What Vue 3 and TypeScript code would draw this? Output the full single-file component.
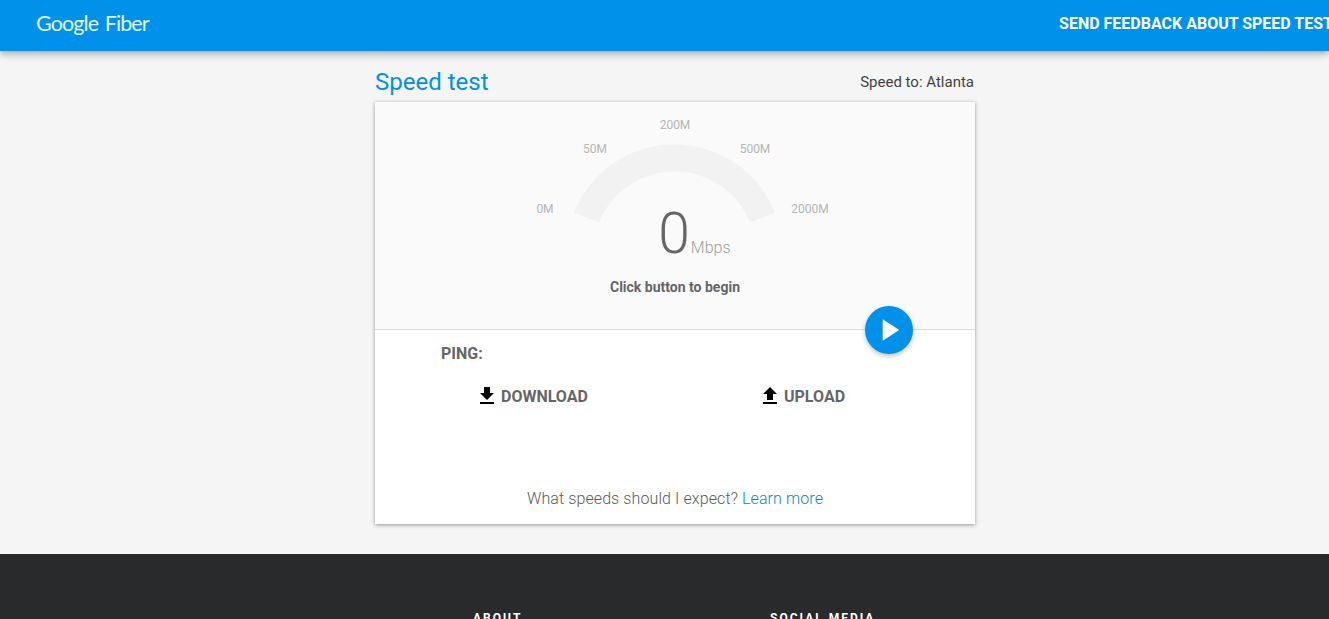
<script setup lang="ts">
const ticks = [
  { label: '0M', x: 170, y: 111 },
  { label: '50M', x: 220, y: 51 },
  { label: '200M', x: 300, y: 27 },
  { label: '500M', x: 380, y: 51 },
  { label: '2000M', x: 435, y: 111 },
]
</script>

<template>
  <div class="page">
    <header class="topbar">
      <div class="logo">Google Fiber</div>
      <a class="feedback">SEND FEEDBACK ABOUT SPEED TEST</a>
    </header>
    <main class="main">
      <div class="column">
        <div class="heading">
          <h1>Speed test</h1>
          <span class="server">Speed to: Atlanta</span>
        </div>
        <section class="card">
          <div class="panel">
            <svg class="gauge" width="600" height="165" viewBox="0 0 600 165">
              <path class="track" d="M 211.5 115.5 A 94.8 94.8 0 0 1 387.5 115.5" />
              <text v-for="t in ticks" :key="t.label" class="tick" :x="t.x" :y="t.y" text-anchor="middle">{{ t.label }}</text>
            </svg>
            <div class="reading"><span class="value">0</span><span class="unit">Mbps</span></div>
            <div class="status">Click button to begin</div>
            <button class="fab" aria-label="Start">
              <svg width="24" height="24" viewBox="0 0 24 24"><path d="M5.7 1.2v21.6L22.3 12z" fill="#fff" /></svg>
            </button>
          </div>
          <div class="results">
            <div class="ping">PING:</div>
            <div class="rates">
              <div class="rate">
                <svg width="24" height="24" viewBox="0 0 24 24"><path d="M19 9h-4V3H9v6H5l7 7 7-7zM5 18v2h14v-2H5z" fill="#000" /></svg>
                <span>DOWNLOAD</span>
              </div>
              <div class="rate">
                <svg width="24" height="24" viewBox="0 0 24 24"><path d="M9 16h6v-6h4l-7-7-7 7h4v6zm-4 2h14v2H5v-2z" fill="#000" /></svg>
                <span>UPLOAD</span>
              </div>
            </div>
            <p class="expect">What speeds should I expect? <a>Learn more</a></p>
          </div>
        </section>
      </div>
    </main>
    <footer class="footer">
      <div class="foot-col">ABOUT</div>
      <div class="foot-col">SOCIAL MEDIA</div>
    </footer>
  </div>
</template>

<style>
html, body { margin: 0; height: 100%; overflow: hidden; }
</style>

<style scoped>
.page {
  height: 619px;
  overflow: hidden;
  background: #f5f5f5;
  font-family: Roboto, "Liberation Sans", sans-serif;
  display: flex;
  flex-direction: column;
}
.topbar {
  height: 51px;
  flex: none;
  background: #0091ea;
  box-shadow: 0 2px 8px rgba(0, 0, 0, 0.38);
  display: flex;
  align-items: center;
  justify-content: space-between;
  padding-left: 36px;
  position: relative;
  z-index: 1;
  white-space: nowrap;
}
.logo {
  font-family: Lato, sans-serif;
  font-size: 21.5px;
  letter-spacing: -0.9px;
  word-spacing: 2px;
  color: #e3f3fd;
  padding-bottom: 6px;
}
.feedback {
  font-size: 16px;
  font-weight: 700;
  color: #fff;
  margin-right: -4px;
  padding-bottom: 4px;
}
.main {
  flex: none;
  height: 503px;
  padding-left: 375px;
}
.column {
  width: 600px;
}
.heading {
  height: 51px;
  display: flex;
  justify-content: space-between;
  align-items: center;
}
.heading h1 {
  margin: 0;
  font-size: 24px;
  font-weight: 400;
  color: #0091ea;
  padding-top: 10px;
}
.server {
  font-size: 15px;
  color: #424242;
  padding-top: 10px;
  margin-right: 1px;
}
.card {
  height: 422px;
  background: #fff;
  box-shadow: 0 1px 4px rgba(0, 0, 0, 0.4);
  display: flex;
  flex-direction: column;
}
.panel {
  height: 228px;
  flex: none;
  box-sizing: border-box;
  background: #fafafa;
  border-bottom: 1px solid #dcdcdc;
  position: relative;
  display: flex;
  flex-direction: column;
  align-items: center;
}
.gauge {
  position: absolute;
  left: 0;
  top: 0;
}
.track {
  fill: none;
  stroke: #f2f2f2;
  stroke-width: 27;
}
.tick {
  font-family: Roboto, sans-serif;
  font-size: 12px;
  fill: #b5b5b5;
}
.reading {
  margin: 99px 2px 0 0;
  height: 66px;
  position: relative;
  color: #666;
  font-weight: 300;
  line-height: 66px;
}
.value {
  font-size: 57px;
}
.unit {
  position: absolute;
  left: 100%;
  bottom: 0;
  line-height: 38px;
  font-size: 16px;
  color: #9e9e9e;
  margin-left: 1px;
}
.status {
  margin-top: 12px;
  font-size: 14px;
  font-weight: 700;
  color: #666;
  position: relative;
}
.fab {
  position: absolute;
  left: 490px;
  top: 204px;
  width: 48px;
  height: 48px;
  padding: 0;
  border: none;
  border-radius: 50%;
  background: #0091ea;
  box-shadow: 0 2px 5px rgba(0, 0, 0, 0.26);
  display: flex;
  align-items: center;
  justify-content: center;
}
.results {
  flex: 1;
  display: flex;
  flex-direction: column;
  color: #666;
}
.ping {
  margin: 14px 0 0 66px;
  font-size: 16px;
  font-weight: 700;
  line-height: 19px;
}
.rates {
  display: grid;
  grid-template-columns: 283px 1fr;
  margin: 21px 0 0 100px;
}
.rate {
  display: flex;
  align-items: center;
  gap: 2px;
  font-size: 16px;
  font-weight: 700;
  height: 24px;
}
.expect {
  margin: auto 0 16px;
  text-align: center;
  font-size: 16px;
  line-height: 19px;
  font-weight: 300;
  letter-spacing: 0.1px;
  color: #5a5a5a;
}
.expect a {
  color: #0288d1;
}
.footer {
  flex: 1;
  background: #292a2c;
  display: grid;
  grid-template-columns: 297px auto;
  justify-content: start;
  padding: 57px 0 0 473px;
  color: #fff;
  font-size: 12px;
  font-weight: 700;
  letter-spacing: 2px;
}
</style>
